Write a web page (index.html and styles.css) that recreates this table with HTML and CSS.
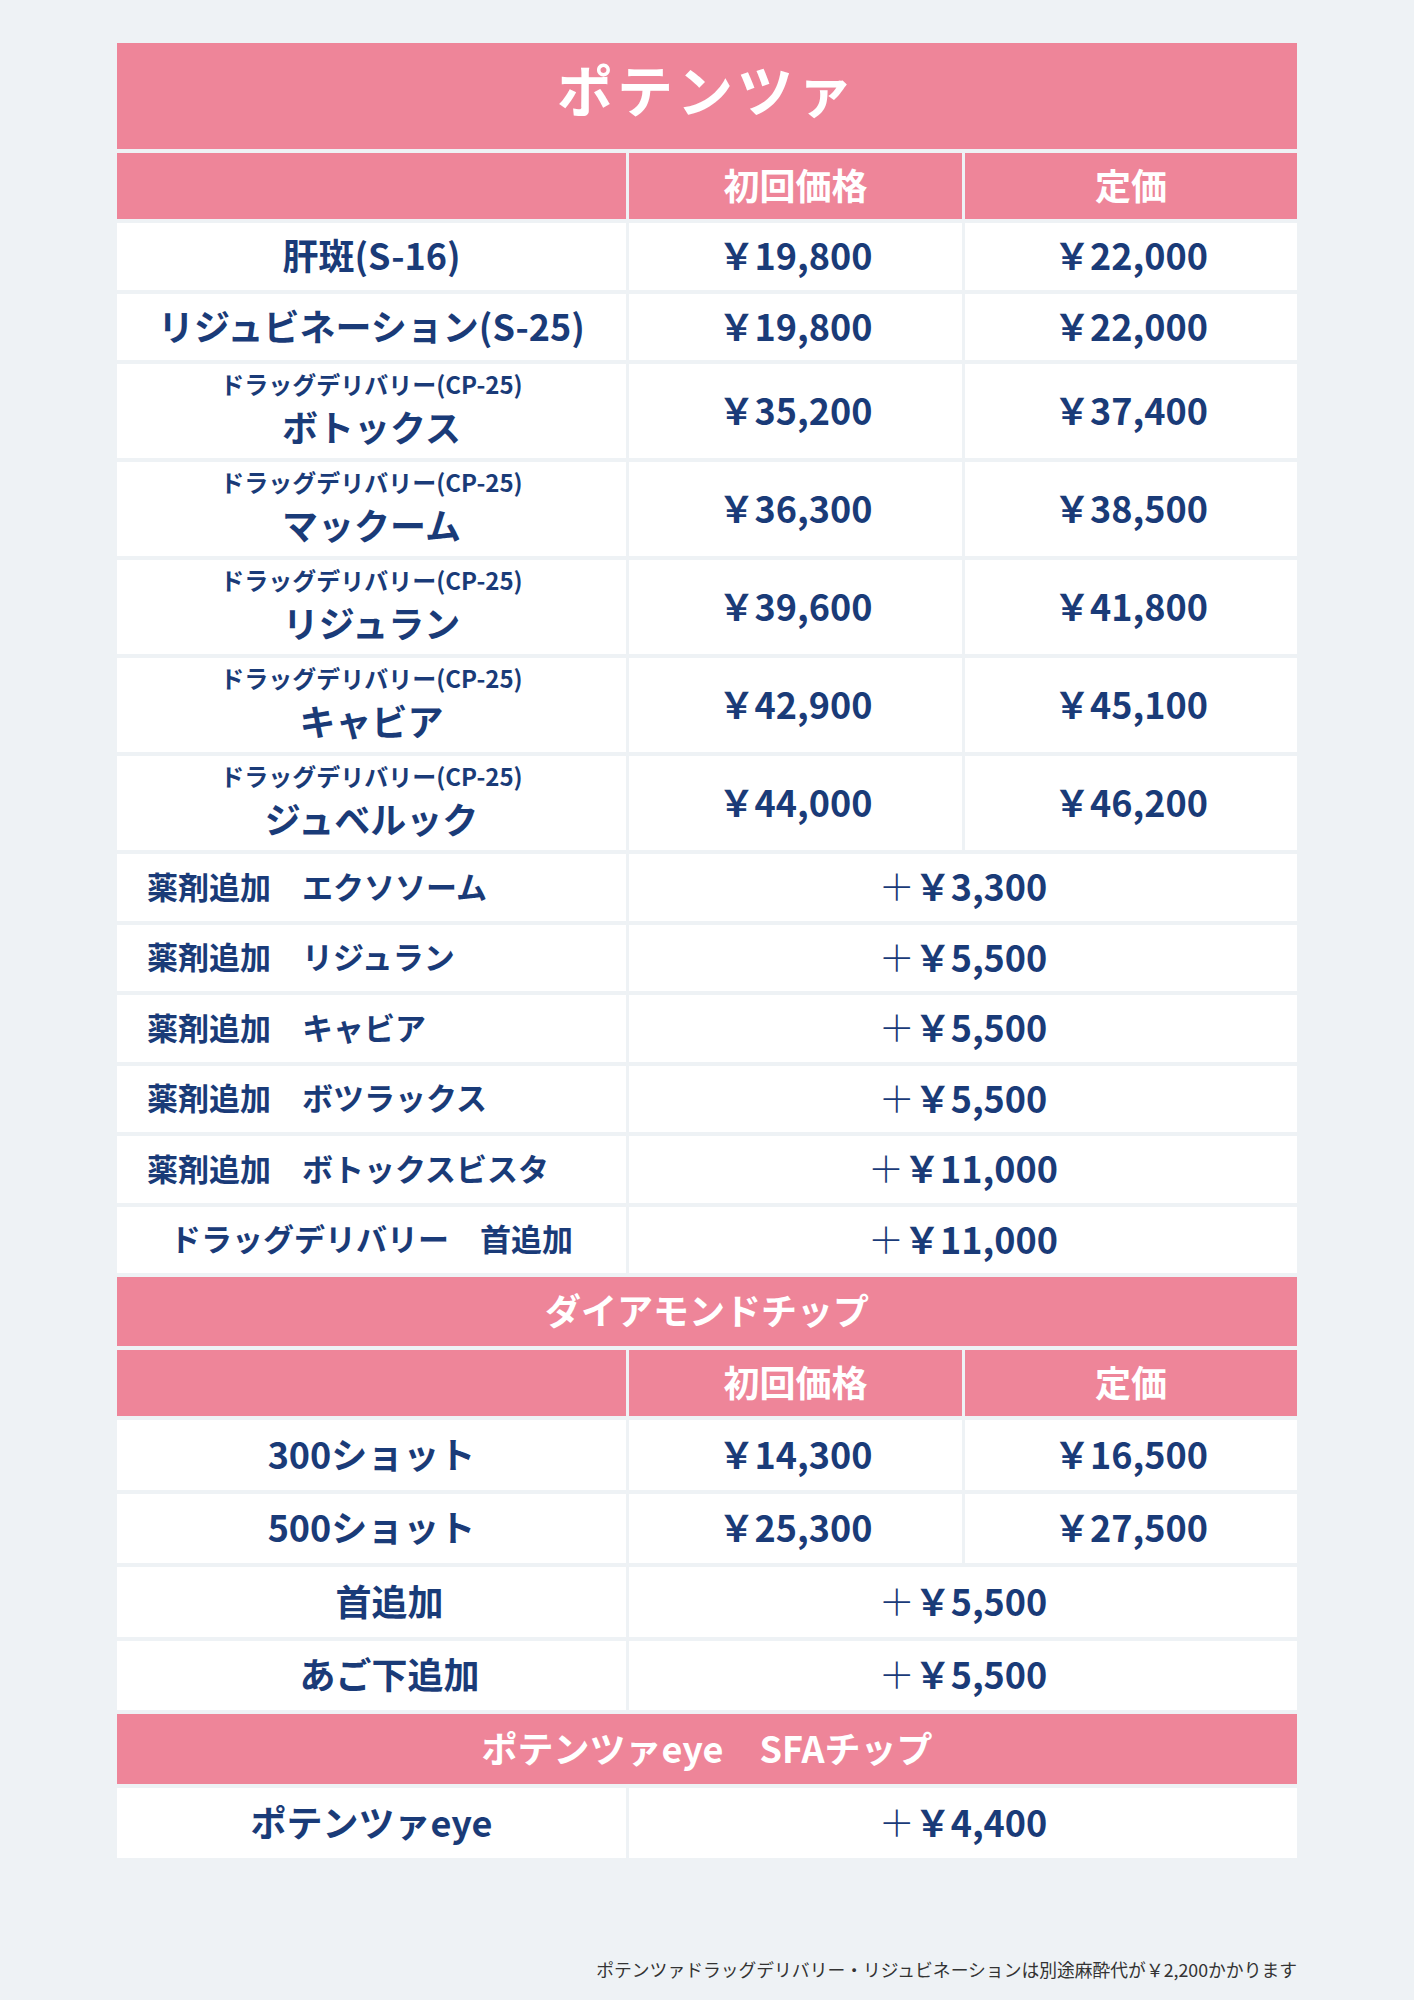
FILE: index.html
```html
<!DOCTYPE html>
<html lang="ja">
<head>
<meta charset="utf-8">
<title>ポテンツァ 料金表</title>
<link rel="stylesheet" href="styles.css">
</head>
<body>
<div class="sheet">
  <div class="price-table">
    <div class="row row-title"><div class="cell head title">ポテンツァ</div></div>
    <div class="row row-head">
      <div class="cell head"></div>
      <div class="cell head">初回価格</div>
      <div class="cell head">定価</div>
    </div>
    <div class="row row-s">
      <div class="cell">肝斑(S-16)</div>
      <div class="cell">￥19,800</div>
      <div class="cell">￥22,000</div>
    </div>
    <div class="row row-s">
      <div class="cell">リジュビネーション(S-25)</div>
      <div class="cell">￥19,800</div>
      <div class="cell">￥22,000</div>
    </div>
    <div class="row row-d">
      <div class="cell stack"><span class="sub">ドラッグデリバリー(CP-25)</span><span>ボトックス</span></div>
      <div class="cell">￥35,200</div>
      <div class="cell">￥37,400</div>
    </div>
    <div class="row row-d">
      <div class="cell stack"><span class="sub">ドラッグデリバリー(CP-25)</span><span>マックーム</span></div>
      <div class="cell">￥36,300</div>
      <div class="cell">￥38,500</div>
    </div>
    <div class="row row-d">
      <div class="cell stack"><span class="sub">ドラッグデリバリー(CP-25)</span><span>リジュラン</span></div>
      <div class="cell">￥39,600</div>
      <div class="cell">￥41,800</div>
    </div>
    <div class="row row-d">
      <div class="cell stack"><span class="sub">ドラッグデリバリー(CP-25)</span><span>キャビア</span></div>
      <div class="cell">￥42,900</div>
      <div class="cell">￥45,100</div>
    </div>
    <div class="row row-d">
      <div class="cell stack"><span class="sub">ドラッグデリバリー(CP-25)</span><span>ジュベルック</span></div>
      <div class="cell">￥44,000</div>
      <div class="cell">￥46,200</div>
    </div>
    <div class="row row-s">
      <div class="cell small left">薬剤追加　エクソソーム</div>
      <div class="cell span2"><span class="plus">＋</span>￥3,300</div>
    </div>
    <div class="row row-s">
      <div class="cell small left">薬剤追加　リジュラン</div>
      <div class="cell span2"><span class="plus">＋</span>￥5,500</div>
    </div>
    <div class="row row-s">
      <div class="cell small left">薬剤追加　キャビア</div>
      <div class="cell span2"><span class="plus">＋</span>￥5,500</div>
    </div>
    <div class="row row-s">
      <div class="cell small left">薬剤追加　ボツラックス</div>
      <div class="cell span2"><span class="plus">＋</span>￥5,500</div>
    </div>
    <div class="row row-s">
      <div class="cell small left">薬剤追加　ボトックスビスタ</div>
      <div class="cell span2"><span class="plus">＋</span>￥11,000</div>
    </div>
    <div class="row row-s">
      <div class="cell small">ドラッグデリバリー　首追加</div>
      <div class="cell span2"><span class="plus">＋</span>￥11,000</div>
    </div>

    <div class="row row-sec"><div class="cell head full">ダイアモンドチップ</div></div>
    <div class="row row-head">
      <div class="cell head"></div>
      <div class="cell head">初回価格</div>
      <div class="cell head">定価</div>
    </div>
    <div class="row row-m">
      <div class="cell">300ショット</div>
      <div class="cell">￥14,300</div>
      <div class="cell">￥16,500</div>
    </div>
    <div class="row row-m">
      <div class="cell">500ショット</div>
      <div class="cell">￥25,300</div>
      <div class="cell">￥27,500</div>
    </div>
    <div class="row row-m">
      <div class="cell indent">首追加</div>
      <div class="cell span2"><span class="plus">＋</span>￥5,500</div>
    </div>
    <div class="row row-m">
      <div class="cell indent">あご下追加</div>
      <div class="cell span2"><span class="plus">＋</span>￥5,500</div>
    </div>

    <div class="row row-sec2"><div class="cell head full">ポテンツァeye　SFAチップ</div></div>
    <div class="row row-sec2">
      <div class="cell">ポテンツァeye</div>
      <div class="cell span2"><span class="plus">＋</span>￥4,400</div>
    </div>
  </div>
  <p class="note">ポテンツァドラッグデリバリー・リジュビネーションは別途麻酔代が￥2,200かかります</p>
</div>
</body>
</html>
```

FILE: styles.css
```css
html, body {
  margin: 0;
  padding: 0;
  background: #eef2f5;
}

body {
  font-family: "Noto Sans CJK JP", "Noto Sans", sans-serif;
}

.sheet {
  width: 1180px;
  margin-left: 117px;
  padding-top: 43px;
}

.price-table {
  display: flex;
  flex-direction: column;
  gap: 4px;
}

.row {
  display: grid;
  grid-template-columns: 509px 333px 332px;
  column-gap: 3px;
}

.row-title { height: 106px; }
.row-head { height: 66px; }
.row-s { height: 66.5px; }
.row-d { height: 94px; }
.row-sec { height: 69px; }
.row-m { height: 69.5px; }
.row-sec2 { height: 70px; }

.cell {
  box-sizing: border-box;
  background: #ffffff;
  color: #1a3b78;
  font-size: 36px;
  font-weight: 700;
  line-height: 1.4;
  display: flex;
  align-items: center;
  justify-content: center;
  padding-bottom: 4px;
  white-space: nowrap;
}

.cell.head {
  background: #ee8599;
  color: #ffffff;
}

.cell.title {
  grid-column: 1 / -1;
  font-size: 56px;
  letter-spacing: 4px;
  padding-bottom: 15px;
}

.cell.full {
  grid-column: 1 / -1;
}

.cell.span2 {
  grid-column: 2 / 4;
}

.cell.stack {
  flex-direction: column;
}

.cell.stack .sub {
  font-size: 24px;
  line-height: 1.4;
}

.cell.stack span {
  line-height: 1.4;
}

.cell.small {
  font-size: 31px;
}

.cell.left {
  justify-content: flex-start;
  padding-left: 30px;
}

.cell.indent {
  padding-left: 36px;
}

.plus {
  font-weight: 300;
}

.note {
  margin: 98px 0 0;
  text-align: right;
  font-size: 17.8px;
  line-height: 26px;
  font-weight: 400;
  color: #333333;
}
```
